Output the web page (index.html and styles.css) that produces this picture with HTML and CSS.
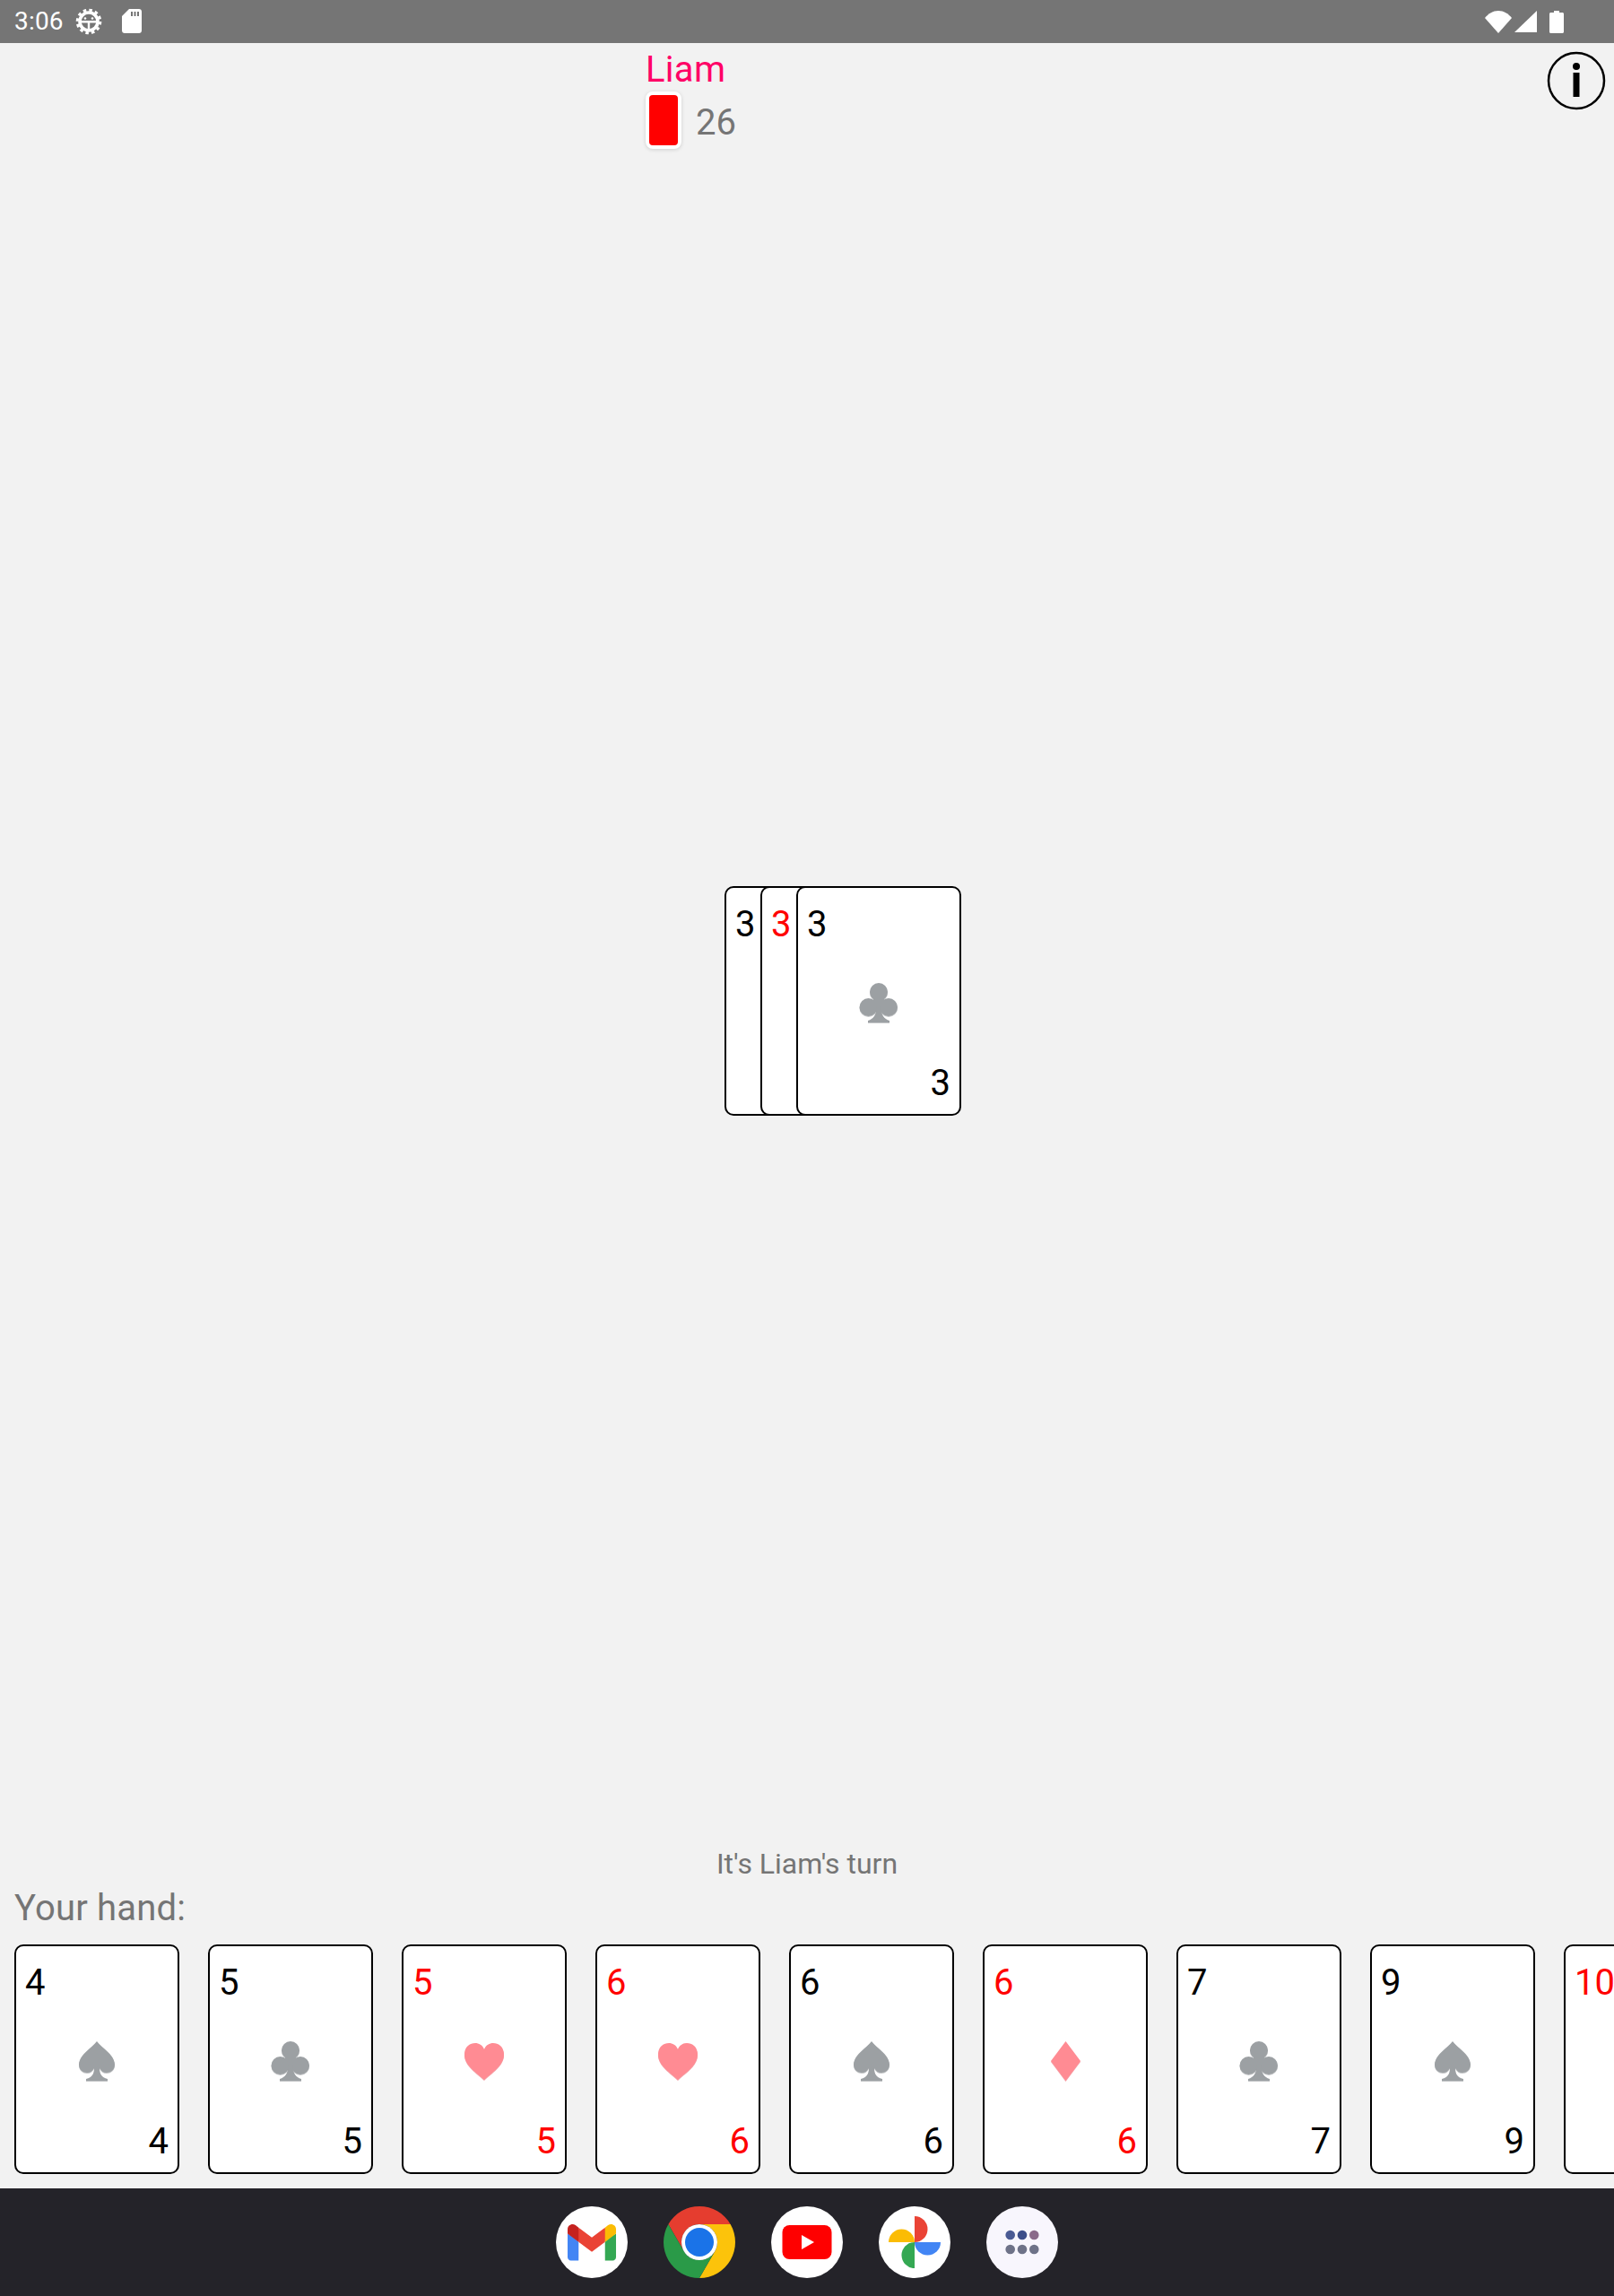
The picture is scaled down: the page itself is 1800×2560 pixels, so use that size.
FILE: index.html
```html
<!DOCTYPE html>
<html lang="en">
<head>
<meta charset="utf-8">
<title>Card game</title>
<link rel="stylesheet" href="styles.css">
</head>
<body>
<svg class="defs" width="0" height="0" aria-hidden="true">
  <symbol id="club" viewBox="0 0 44 44"><circle cx="22" cy="10" r="10"/><circle cx="10.500" cy="27" r="10"/><circle cx="33" cy="27" r="10"/><rect x="16" y="14" width="12" height="17"/><path d="M19.500 26C19.500 36 16 40 10 42V44H34V42C28 40 24.500 36 24.500 26Z"/></symbol>
  <symbol id="spade" viewBox="0 0 44 44"><path d="M22 0C27 7 42 15 42 26C42 32 37 35 33 35C29 35 27 33 25 30C25 36 27 40 34 42V44H10V42C17 40 19 36 19 30C17 33 15 35 11 35C7 35 2 32 2 26C2 15 17 7 22 0Z"/></symbol>
  <symbol id="heart" viewBox="0 0 44 41"><path d="M22 41C14 33 0 25 0 13C0 5 5 0 12 0C16 0 20 2 22 7C24 2 28 0 32 0C39 0 44 5 44 13C44 25 30 33 22 41Z"/></symbol>
  <symbol id="diamond" viewBox="0 0 33 44"><path d="M16.500 0L33 22L16.500 44L0 22Z"/></symbol>
</svg>
<div class="screen">
  <header class="status">
    <div class="status-group">
      <span class="clock">3:06</span>
      <svg class="i-gear" viewBox="0 0 30 30"><circle cx="15" cy="15" r="10" fill="none" stroke="#fff" stroke-width="3.600"/><circle cx="15" cy="15" r="12.800" fill="none" stroke="#fff" stroke-width="3" stroke-dasharray="3.500 3.200"/><path d="M6 14H24V16.500H16.200V24H13.800V16.500H6Z" fill="#fff"/><circle cx="11" cy="11.500" r="1.300" fill="#fff"/><circle cx="19" cy="11.500" r="1.300" fill="#fff"/></svg>
      <svg class="i-sd" viewBox="0 0 22 27"><path d="M8 0H19C20.700 0 22 1.300 22 3V24C22 25.700 20.700 27 19 27H3C1.300 27 0 25.700 0 24V8Z" fill="#fff"/><rect x="10" y="3" width="2" height="5" fill="#757575"/><rect x="13.500" y="3" width="2" height="5" fill="#757575"/><rect x="17" y="3" width="2" height="5" fill="#757575"/></svg>
    </div>
    <div class="status-group status-right">
      <svg class="i-wifi" viewBox="0 0 30 25"><path d="M15 25L0 8C4 3 9 0 15 0C21 0 26 3 30 8Z" fill="#fff"/></svg>
      <svg class="i-signal" viewBox="0 0 25 24"><path d="M25 0V24H0Z" fill="#fff"/></svg>
      <svg class="i-batt" viewBox="0 0 16 25"><path d="M5 0H11V2H14.500C15.300 2 16 2.700 16 3.500V23.500C16 24.300 15.300 25 14.500 25H1.500C0.700 25 0 24.300 0 23.500V3.500C0 2.700 0.700 2 1.500 2H5Z" fill="#fff"/></svg>
    </div>
  </header>

  <main class="table">
    <svg class="info" viewBox="0 0 66 66"><circle cx="33" cy="33" r="31" fill="none" stroke="#000" stroke-width="2.500"/><circle cx="33" cy="17" r="4" fill="#000"/><rect x="29.500" y="24" width="7" height="27" fill="#000"/></svg>

    <section class="opponent">
      <div class="opponent-name">Liam</div>
      <div class="opponent-cards">
        <div class="card-back"></div>
        <span class="opponent-count">26</span>
      </div>
    </section>

    <section class="pile">
      <article class="card"><span class="rank">3</span><span class="suit"></span><span class="rank rank-end">3</span></article>
      <article class="card red"><span class="rank">3</span><span class="suit"></span><span class="rank rank-end">3</span></article>
      <article class="card"><span class="rank">3</span><svg class="suit suit-44"><use href="#club"/></svg><span class="rank rank-end">3</span></article>
    </section>

    <p class="turn">It's Liam's turn</p>
    <h2 class="hand-label">Your hand:</h2>
    <section class="hand">
      <article class="card"><span class="rank">4</span><svg class="suit suit-44"><use href="#spade"/></svg><span class="rank rank-end">4</span></article>
      <article class="card"><span class="rank">5</span><svg class="suit suit-44"><use href="#club"/></svg><span class="rank rank-end">5</span></article>
      <article class="card red"><span class="rank">5</span><svg class="suit suit-heart"><use href="#heart"/></svg><span class="rank rank-end">5</span></article>
      <article class="card red"><span class="rank">6</span><svg class="suit suit-heart"><use href="#heart"/></svg><span class="rank rank-end">6</span></article>
      <article class="card"><span class="rank">6</span><svg class="suit suit-44"><use href="#spade"/></svg><span class="rank rank-end">6</span></article>
      <article class="card red"><span class="rank">6</span><svg class="suit suit-diamond"><use href="#diamond"/></svg><span class="rank rank-end">6</span></article>
      <article class="card"><span class="rank">7</span><svg class="suit suit-44"><use href="#club"/></svg><span class="rank rank-end">7</span></article>
      <article class="card"><span class="rank">9</span><svg class="suit suit-44"><use href="#spade"/></svg><span class="rank rank-end">9</span></article>
      <article class="card red"><span class="rank">10</span><svg class="suit suit-heart"><use href="#heart"/></svg><span class="rank rank-end">10</span></article>
    </section>
  </main>

  <nav class="dock">
    <svg class="app" viewBox="0 0 80 80"><circle cx="40" cy="40" r="40" fill="#fff"/><g transform="translate(13 20) scale(.211)"><path fill="#4285F4" d="M58.182 192.05V93.14L27.507 65.077 0 49.504v125.091c0 9.658 7.825 17.455 17.455 17.455h40.727Z"/><path fill="#34A853" d="M197.818 192.05h40.727c9.659 0 17.455-7.826 17.455-17.455V49.505l-31.156 17.837-27.026 25.798v98.91Z"/><path fill="#EA4335" d="m58.182 93.14-4.174-38.647 4.174-36.989L128 69.868l69.818-52.364 4.669 34.992-4.669 40.644L128 145.504z"/><path fill="#FBBC04" d="M197.818 17.504V93.14L256 49.504V26.231c0-21.585-24.64-33.89-41.89-20.945l-16.292 12.218Z"/><path fill="#C5221F" d="m0 49.504 26.759 20.07L58.182 93.14V17.504L41.89 5.286C24.61-7.66 0 4.646 0 26.23v23.273Z"/></g></svg>
    <svg class="app" viewBox="0 0 80 80"><path fill="#E53D2F" d="M40 20H74.640A40 40 0 0 0 5.360 20L22.680 50A20 20 0 0 1 40 20Z"/><path fill="#FCC30B" d="M74.640 20H40A20 20 0 0 1 57.320 50L40 80A40 40 0 0 0 74.640 20Z"/><path fill="#2A9A48" d="M5.360 20L22.680 50A20 20 0 0 0 57.320 50L40 80A40 40 0 0 1 5.360 20Z"/><circle cx="40" cy="40" r="20" fill="#fff"/><circle cx="40" cy="40" r="16" fill="#1A73E8"/></svg>
    <svg class="app" viewBox="0 0 80 80"><circle cx="40" cy="40" r="40" fill="#fff"/><rect x="12.500" y="21" width="55" height="38" rx="8" fill="#f00"/><path d="M34 32L48 40L34 48Z" fill="#fff"/></svg>
    <svg class="app" viewBox="0 0 80 80"><circle cx="40" cy="40" r="40" fill="#fff"/><path fill="#EA4335" d="M40 11A14.500 14.500 0 0 1 40 40Z"/><path fill="#4285F4" d="M69 40A14.500 14.500 0 0 1 40 40Z"/><path fill="#34A853" d="M40 69A14.500 14.500 0 0 1 40 40Z"/><path fill="#FBBC04" d="M11 40A14.500 14.500 0 0 1 40 40Z"/></svg>
    <svg class="app" viewBox="0 0 80 80"><circle cx="40" cy="40" r="40" fill="#F8F6FD"/><circle cx="26.700" cy="32" r="5.300" fill="#4A5A94"/><circle cx="40" cy="32" r="5.300" fill="#3D4E8A"/><circle cx="53.300" cy="32" r="5.300" fill="#8A6A8A"/><circle cx="26.700" cy="48" r="5.300" fill="#6E7288"/><circle cx="40" cy="48" r="5.300" fill="#6E7288"/><circle cx="53.300" cy="48" r="5.300" fill="#6E7288"/></svg>
  </nav>
</div>
</body>
</html>
```

FILE: styles.css
```css
* { box-sizing: border-box; }
html, body { margin: 0; padding: 0; }
body { width: 1800px; height: 2560px; overflow: hidden; background: #f2f2f2; font-family: Roboto, "Liberation Sans", sans-serif; }
.defs { position: absolute; }
.screen { display: flex; flex-direction: column; height: 2560px; }

.status { flex: none; height: 48px; background: #757575; display: flex; justify-content: space-between; align-items: center; padding: 0 56px 0 16px; color: #fff; }
.status-group { display: flex; align-items: center; }
.clock { font-size: 28px; line-height: 48px; width: 68px; letter-spacing: .2px; }
.i-gear { width: 30px; height: 30px; }
.i-sd { width: 22px; height: 27px; margin-left: 22px; margin-top: -1px; }
.i-wifi { width: 30px; height: 25px; }
.i-signal { width: 25px; height: 24px; margin-left: 3px; }
.i-batt { width: 16px; height: 25px; margin-left: 14px; }

.table { flex: 1; position: relative; display: flex; flex-direction: column; min-height: 0; }
.info { position: absolute; top: 9px; right: 9px; width: 66px; height: 66px; }

.opponent { padding: 6px 0 0 720px; height: 940px; }
.opponent-name { font-size: 40px; line-height: 47px; color: #f06; letter-spacing: .3px; }
.opponent-cards { display: flex; align-items: center; margin-top: 1px; }
.card-back { width: 40px; height: 64px; background: #f00; border: 4px solid #fff; border-radius: 8px; box-shadow: 0 1px 4px rgba(0,0,0,.15); }
.opponent-count { font-size: 40px; line-height: 47px; color: #757575; margin-left: 16px; margin-top: 4px; }

.card { flex: none; width: 184px; height: 256px; background: #fff; border: 2px solid #000; border-radius: 10px; display: grid; grid-template-rows: auto 1fr auto; justify-items: center; padding: 17px 10px 11px; }
.rank { font-size: 40px; line-height: 47px; color: #000; justify-self: start; }
.rank-end { justify-self: end; }
.red .rank { color: #f00; }
.suit { align-self: center; margin-top: -2px; fill: #9ca0a3; filter: drop-shadow(0 1px 0 #c4c6c8); }
.red .suit { fill: #ff8b93; filter: drop-shadow(0 1px 0 #f2a6ac); }
.suit-44 { width: 44px; height: 44px; }
.suit-heart { width: 44px; height: 41px; }
.suit-diamond { width: 33px; height: 44px; }

.pile { display: flex; justify-content: center; padding-left: 80px; }
.pile .card { margin-right: -144px; }
.pile .card:last-child { margin-right: 0; }

.turn { margin: auto 0 0; text-align: center; font-size: 32px; line-height: 36px; color: #757575; }
.hand-label { margin: 8px 0 0; padding-left: 16px; font-size: 40px; line-height: 47px; font-weight: 400; color: #757575; letter-spacing: .2px; }
.hand { display: flex; gap: 32px; padding: 17px 0 16px 16px; overflow: hidden; }

.dock { flex: none; height: 120px; background: #242329; display: flex; justify-content: center; align-items: center; gap: 40px; }
.app { width: 80px; height: 80px; }
```
